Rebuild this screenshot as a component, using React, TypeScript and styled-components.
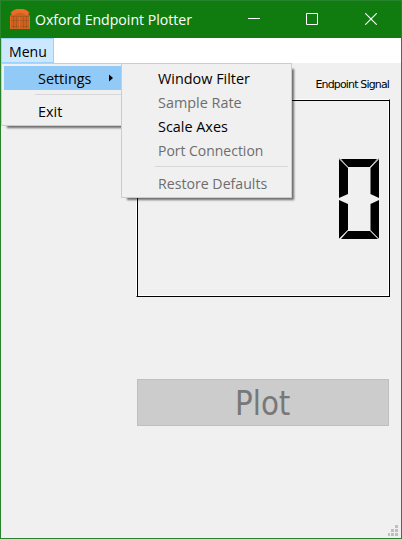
import React from "react";
import styled, { createGlobalStyle, css } from "styled-components";

const GlobalStyle = createGlobalStyle`
  html, body { margin: 0; padding: 0; overflow: hidden; }
  * { box-sizing: border-box; }
`;

const Window = styled.div`
  width: 402px;
  height: 539px;
  display: flex;
  flex-direction: column;
  background: #f0f0f0;
  border: 1px solid #28842b;
  font-family: "Open Sans", "Noto Sans", sans-serif;
  font-size: 15px;
  color: #000;
`;

const Label = styled.span<{ $stretch?: number }>`
  display: inline-block;
  white-space: nowrap;
  transform-origin: left center;
  transform: scaleX(${(p) => p.$stretch ?? 0.96});
`;

const TitleBar = styled.header`
  height: 37px;
  flex: none;
  display: flex;
  align-items: center;
  background: #107c10;
  color: #fff;
  padding: 0 0 1px 9px;
`;

const Title = styled.div`
  flex: 1;
  width: 0;
  padding: 0 0 0 5px;
  line-height: 20px;
`;

const Controls = styled.div`
  display: flex;
  gap: 47px;
  padding-right: 24px;

  svg:first-child {
    margin-right: -1px;
  }
`;

const MenuBar = styled.nav`
  height: 25px;
  flex: none;
  background: #fff;
  display: flex;
`;

const MenuButton = styled.div`
  position: relative;
  width: 53px;
  height: 25px;
  padding-left: 6.5px;
  line-height: 25px;
  background: #cce8ff;
  border: 1px solid #99d1ff;
`;

const menuSurface = css`
  position: absolute;
  background: #f0f0f0;
  border: 1px solid #ccc;
  box-shadow: 4px 4px 2px -2px rgba(0, 0, 0, 0.55);
  padding: 2px;
`;

const MainMenu = styled.div`
  ${menuSurface}
  left: -1px;
  top: 24px;
  width: 125px;
  height: 63px;
`;

const SubMenu = styled.div`
  ${menuSurface}
  left: 119px;
  top: 24px;
  width: 171px;
  height: 135px;
`;

const MenuItem = styled.div<{ $active?: boolean; $disabled?: boolean }>`
  height: 24px;
  display: flex;
  align-items: center;
  padding-left: 34px;
  line-height: 24px;
  background: ${(p) => (p.$active ? "#91c9f7" : "transparent")};
  color: ${(p) => (p.$disabled ? "#6d6d6d" : "#000")};
`;

const Arrow = styled.svg`
  margin-left: 15px;
`;

const Separator = styled.div`
  height: 1px;
  margin: 4px 1px 4px 31px;
  background: #d7d7d7;
`;

const Content = styled.main`
  flex: 1;
  display: flex;
  flex-direction: column;
  padding: 14px 11px 0 135px;
`;

const Caption = styled.div`
  height: 22px;
  display: flex;
  justify-content: flex-end;
  padding-right: 1px;
  font: 11px/16px "DejaVu Sans", sans-serif;
  letter-spacing: -0.85px;
`;

const Display = styled.div`
  width: 254px;
  height: 198px;
  border: 1px solid #000;
  border-top-color: #fff;
  border-left-color: #fff;
  box-shadow: inset 1px 1px #000, inset -1px -1px #fff;
  display: flex;
  justify-content: flex-end;
  padding: 58px 10px 0 0;
`;

const PlotButton = styled.button`
  width: 252px;
  height: 47px;
  margin: 82px 0 0 1px;
  padding: 3px 0 0 97px;
  text-align: left;
  border: 1px solid #bfbfbf;
  background: #ccc;
  color: #787878;
  font: 33px/40px "DejaVu Sans Condensed", "DejaVu Sans", sans-serif;
`;

const StatusBar = styled.footer`
  height: 13px;
  display: flex;
  justify-content: flex-end;
  padding-right: 3px;
`;

function Logo() {
  return (
    <svg width="20" height="20" viewBox="0 0 20 20">
      <path d="M0 20V7L3 3C7-1 13-1 17 3L20 7V20Z" fill="#d0601f" />
      <path d="M2 5C6 .5 14 .5 18 5" fill="none" stroke="#ee6c2a" strokeWidth="4" />
      <path d="M1 7.5H19M1 11.5H19M1 17.5H19" stroke="#8f561b" opacity=".5" />
      <path d="M3.5 7V19M6.5 8V19M13.5 8V19M16.5 7V19" stroke="#8f561b" opacity=".5" />
      <path d="M.5 7V20M19.5 7V20M9.5 8V19" stroke="#ee6c2a" opacity=".7" />
    </svg>
  );
}

function Digit() {
  return (
    <svg width="40" height="82" viewBox="0 0 40 82">
      <path d="M2 1H38L31 9H9Z" />
      <path d="M0 1L9 10V36L0 40Z" />
      <path d="M40 1L31.5 10V36L40 40Z" />
      <path d="M0 42L9 46V72L0 81Z" />
      <path d="M40 42L31.5 46V72L40 81Z" />
      <path d="M9 73H31L39 81H2Z" />
      <path d="M0 0L9 9M40 0L31 9M0 81L9 72M40 81L31 72" stroke="#bbb" fill="none" />
    </svg>
  );
}

function Grip() {
  return (
    <svg width="11" height="11" viewBox="0 0 11 11" fill="#bfbfbf" shapeRendering="crispEdges">
      <path d="M8 0h3v3H8zM4 4h3v3H4zM8 4h3v3H8zM1 8h2v3H1zM4 8h3v3H4zM8 8h3v3H8z" />
    </svg>
  );
}

export default function App() {
  return (
    <>
      <GlobalStyle />
      <Window>
        <TitleBar>
          <Logo />
          <Title><Label $stretch={0.94}>Oxford Endpoint Plotter</Label></Title>
          <Controls>
            <svg width="12" height="12"><path d="M0 5.5H12" stroke="#fff" /></svg>
            <svg width="12" height="12"><path d="M.5.5H11.5V11.5H.5Z" stroke="#fff" fill="none" /></svg>
            <svg width="12" height="12"><path d="M.3.3L11.7 11.7M11.7.3L.3 11.7" stroke="#fff" strokeWidth="1.1" /></svg>
          </Controls>
        </TitleBar>
        <MenuBar>
          <MenuButton>
            <Label $stretch={0.94}>Menu</Label>
            <MainMenu>
              <MenuItem $active>
                <Label>Settings</Label>
                <Arrow width="5" height="8"><path d="M0 .5L4 4L0 7.5Z" /></Arrow>
              </MenuItem>
              <Separator />
              <MenuItem><Label>Exit</Label></MenuItem>
            </MainMenu>
            <SubMenu>
              <MenuItem><Label>Window Filter</Label></MenuItem>
              <MenuItem $disabled><Label>Sample Rate</Label></MenuItem>
              <MenuItem><Label>Scale Axes</Label></MenuItem>
              <MenuItem $disabled><Label $stretch={0.93}>Port Connection</Label></MenuItem>
              <Separator />
              <MenuItem $disabled><Label $stretch={0.943}>Restore Defaults</Label></MenuItem>
            </SubMenu>
          </MenuButton>
        </MenuBar>
        <Content>
          <Caption>Endpoint Signal</Caption>
          <Display><Digit /></Display>
          <PlotButton disabled><Label $stretch={0.99}>Plot</Label></PlotButton>
        </Content>
        <StatusBar><Grip /></StatusBar>
      </Window>
    </>
  );
}
